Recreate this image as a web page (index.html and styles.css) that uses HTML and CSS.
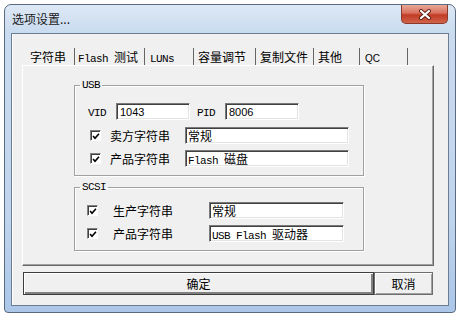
FILE: index.html
```html
<!DOCTYPE html>
<html lang="zh-CN">
<head>
    <meta charset="UTF-8">
    <title>选项设置</title>
    <link rel="stylesheet" href="styles.css">
</head>
<body>
    <div class="window">
        <div class="titlebar">
            <span class="title">选项设置...</span>
            <div class="close">
                <svg width="14" height="11" viewBox="0 0 14 11">
                    <path d="M3 2 L11 9 M11 2 L3 9" stroke="#5b2418" stroke-width="4" stroke-linecap="round"/>
                    <path d="M3 2 L11 9 M11 2 L3 9" stroke="#fff" stroke-width="2.2" stroke-linecap="round"/>
                </svg>
            </div>
        </div>

        <div class="client">
            <div class="tabs">
                <div class="tab t1 active">字符串</div>
                <div class="tab t2"><span class="lat">Flash&nbsp;</span>测试</div>
                <div class="tab t3"><span class="lat">LUNs</span></div>
                <div class="tab t4">容量调节</div>
                <div class="tab t5">复制文件</div>
                <div class="tab t6">其他</div>
                <div class="tab t7"><span class="qc">QC</span></div>
            </div>

            <div class="panel">
                <fieldset class="group usb">
                    <legend class="lat">USB</legend>
                    <div class="row r1">
                        <span class="lat vid">VID</span>
                        <span class="field num id">1043</span>
                        <span class="lat pid">PID</span>
                        <span class="field num id">8006</span>
                    </div>
                    <div class="row r2">
                        <span class="check"><svg width="9" height="9" viewBox="0 0 9 9"><path d="M1.2 4 L3.4 6.6 L7.8 1.4" fill="none" stroke="#000" stroke-width="1.8"/></svg></span>
                        <span class="lbl">卖方字符串</span>
                        <span class="field text">常规</span>
                    </div>
                    <div class="row r3">
                        <span class="check"><svg width="9" height="9" viewBox="0 0 9 9"><path d="M1.2 4 L3.4 6.6 L7.8 1.4" fill="none" stroke="#000" stroke-width="1.8"/></svg></span>
                        <span class="lbl">产品字符串</span>
                        <span class="field text"><span class="lat">Flash&nbsp;</span>磁盘</span>
                    </div>
                </fieldset>

                <fieldset class="group scsi">
                    <legend class="lat">SCSI</legend>
                    <div class="row r1">
                        <span class="check"><svg width="9" height="9" viewBox="0 0 9 9"><path d="M1.2 4 L3.4 6.6 L7.8 1.4" fill="none" stroke="#000" stroke-width="1.8"/></svg></span>
                        <span class="lbl">生产字符串</span>
                        <span class="field text">常规</span>
                    </div>
                    <div class="row r2">
                        <span class="check"><svg width="9" height="9" viewBox="0 0 9 9"><path d="M1.2 4 L3.4 6.6 L7.8 1.4" fill="none" stroke="#000" stroke-width="1.8"/></svg></span>
                        <span class="lbl">产品字符串</span>
                        <span class="field text"><span class="lat">USB Flash&nbsp;</span>驱动器</span>
                    </div>
                </fieldset>
            </div>

            <div class="buttons">
                <button class="btn ok">确定</button>
                <button class="btn cancel">取消</button>
            </div>
        </div>
    </div>
</body>
</html>
```

FILE: styles.css
```css
/* Dialog window, Win7 basic look */
body {
    margin: 0;
    background: #fff;
    font-family: "Noto Sans CJK SC", sans-serif;
    font-size: 12px;
    color: #000;
}
.window {
    box-sizing: border-box;
    width: 452px;
    height: 309px;
    margin: 4px 0 0 4px;
    padding: 0 6px 6px;
    border: 1px solid #5a6a80;
    border-radius: 7px 7px 4px 4px;
    background: linear-gradient(#dde8f5, #c9dbef 28px, #bfd4ed 70%, #abc6e8);
    display: flex;
    flex-direction: column;
}
.titlebar {
    height: 28px;
    display: flex;
    align-items: center;
}
.title {
    padding-left: 1px;
    line-height: 14px;
    color: #1a1a1a;
}
.close {
    box-sizing: border-box;
    width: 47px;
    height: 19px;
    margin-left: auto;
    margin-right: 1px;
    align-self: flex-start;
    border: 1px solid #8a3a2c;
    border-top: none;
    border-radius: 0 0 5px 5px;
    background: linear-gradient(#e8a898, #d8705c 45%, #c13b23 55%, #d2644c);
    display: flex;
    align-items: center;
    justify-content: center;
}
.close svg {
    display: block;
}

/* Client area */
.client {
    box-sizing: border-box;
    height: 273px;
    padding: 14px 14px 0 10px;
    border: 1px solid #6c7c93;
    background: #f0f0f0;
    box-shadow: inset 1px 0 0 #fff;
    display: flex;
    flex-direction: column;
}
.lat {
    font-family: "Liberation Mono", monospace;
    font-size: 11px;
    letter-spacing: -0.6px;
}
.qc {
    font-family: "Liberation Sans", sans-serif;
    font-size: 10px;
}

/* Tabs */
.tabs {
    display: flex;
    height: 17px;
}
.tab {
    box-sizing: border-box;
    height: 17px;
    line-height: 17px;
    padding-left: 4px;
    border-right: 1px solid #666;
    white-space: nowrap;
}
.t1 { width: 53px; padding-left: 8px; }
.t2 { width: 70px; padding-left: 3px; }
.t3 { width: 49px; padding-left: 5px; }
.t4 { width: 62px; }
.t5 { width: 58px; }
.t6 { width: 46px; }
.t7 { width: 48px; padding-left: 5px; }

.panel {
    box-sizing: border-box;
    width: 412px;
    height: 201px;
    padding: 13px 0 0 51px;
    border-top: 1px solid #fff;
    border-left: 1px solid #fff;
    border-right: 1px solid #696969;
    border-bottom: 1px solid #696969;
    box-shadow: inset -1px -1px 0 #a0a0a0;
}

/* Group boxes */
.group {
    box-sizing: border-box;
    width: 290px;
    margin: 0;
    padding: 0;
    min-width: 0;
    border: 1px solid #a0a0a0;
    box-shadow: 1px 1px 0 #fff, inset 1px 1px 0 #fff;
}
.group legend {
    margin-left: 5px;
    padding: 0 2px;
    line-height: 12px;
}
.usb {
    height: 97px;
}
.scsi {
    height: 70px;
    margin-top: 5px;
}
.row {
    display: flex;
    align-items: center;
    height: 17px;
}
.usb .r1 { margin-top: 12px; }
.usb .r2 { margin-top: 7px; }
.usb .r3 { margin-top: 6px; }
.scsi .r1 { margin-top: 9px; }
.scsi .r2 { margin-top: 6px; }

.vid { margin-left: 13px; width: 18px; padding-top: 3px; }
.pid { margin-left: 7px; width: 18px; padding-top: 3px; }
.id { margin-left: 10px; width: 74px; }

.check {
    box-sizing: border-box;
    width: 11px;
    height: 11px;
    border: 1px solid;
    border-color: #808080 #fff #fff #808080;
    box-shadow: inset 1px 1px 0 #404040;
    background: #fff;
    display: flex;
    align-items: center;
    justify-content: center;
}
.check svg {
    display: block;
    margin: 1px 0 0 1px;
}
.usb .check { margin-left: 15px; }
.usb .lbl { margin-left: 9px; width: 75px; }
.usb .text { width: 164px; }
.scsi .check { margin-left: 12px; }
.scsi .lbl { margin-left: 15px; width: 96px; }
.scsi .text { width: 135px; }

.field {
    box-sizing: border-box;
    height: 17px;
    padding-left: 2px;
    line-height: 16px;
    background: #fff;
    border: 1px solid;
    border-color: #7a7a7a #fff #fff #7a7a7a;
    box-shadow: inset 1px 1px 0 #404040, inset -1px -1px 0 #e3e3e3;
    white-space: nowrap;
    overflow: hidden;
}
.num {
    padding-left: 3px;
    font-family: "Liberation Sans", sans-serif;
    font-size: 11px;
}

/* Buttons */
.buttons {
    display: flex;
    margin: 6px 0 0 1px;
}
.btn {
    box-sizing: border-box;
    height: 23px;
    padding: 0;
    font-family: "Noto Sans CJK SC", sans-serif;
    font-size: 12px;
    color: #000;
    background: #f0f0f0;
    border: 1px solid #6e6e6e;
    box-shadow: inset 1px 1px 0 #fff, inset -1px -1px 0 #a0a0a0;
}
.ok {
    width: 351px;
    border-color: #3c3c3c;
    box-shadow: inset 1px 1px 0 #fff, inset -2px -2px 0 #808080;
}
.cancel {
    width: 59px;
}
```
